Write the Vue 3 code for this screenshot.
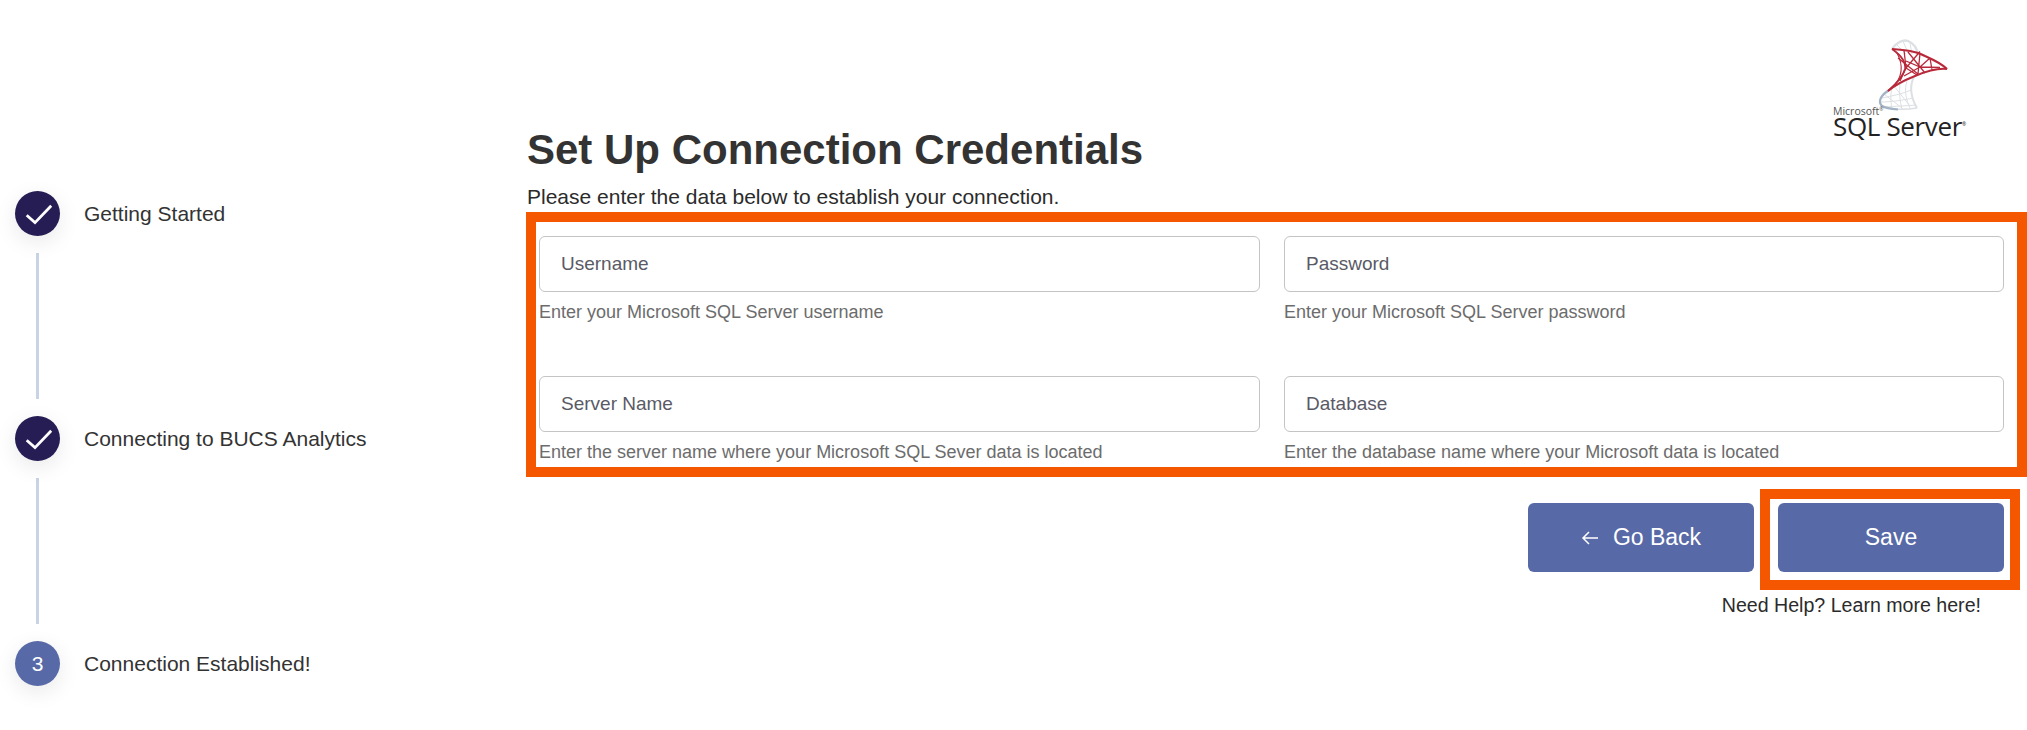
<script setup>
const steps = [
  { label: 'Getting Started', done: true },
  { label: 'Connecting to BUCS Analytics', done: true },
  { label: 'Connection Established!', done: false, n: 3 }
]
const fields = [
  { ph: 'Username', help: 'Enter your Microsoft SQL Server username' },
  { ph: 'Password', help: 'Enter your Microsoft SQL Server password' },
  { ph: 'Server Name', help: 'Enter the server name where your Microsoft SQL Sever data is located' },
  { ph: 'Database', help: 'Enter the database name where your Microsoft data is located' }
]
</script>

<template>
  <div class="page">
    <aside class="steps">
      <template v-for="(s, i) in steps" :key="s.label">
        <div class="step">
          <div class="dot" :class="{ done: s.done }">
            <svg v-if="s.done" width="30" height="24" viewBox="0 0 30 24">
              <path d="M3.7 13.2 L12 20.6 L28.2 3.8" fill="none" stroke="#fff" stroke-width="2.8" />
            </svg>
            <span v-else>{{ s.n }}</span>
          </div>
          <span class="step-label">{{ s.label }}</span>
        </div>
        <div v-if="i < 2" class="line"></div>
      </template>
    </aside>
    <main class="main">
      <div class="logo">
        <svg class="ribbon" width="90" height="75" viewBox="0 0 90 75">
          <g fill="none" stroke="#dcdfe3" stroke-width="1">
            <path d="M22 13 C26 7 33 3 38 5 C43 7 47 12 48 19" stroke-width="2.4"/>
            <path d="M27 9 L36 18 M33 5 L38 17 M40 7 L42 18"/>
            <path d="M18 54 C10 60 8 66 12 70 C20 74 36 74 47 72" stroke-width="1.6"/>
            <path d="M44 41 C39 50 41 62 47 72" stroke-width="2"/>
            <path d="M30 48 C29 56 30 66 32 73 M37 45 C34 54 36 64 40 72 M22 52 C20 60 21 68 22 73"/>
            <path d="M12 62 C22 60 32 58 41 54 M10 66 C22 66 34 64 43 62 M14 71 C26 70 36 70 46 69 M14 58 L32 72 M24 50 L40 70"/>
          </g>
          <path d="M18 55 C10 60 8 66 12 70 C16 72.5 22 73 28 73.5" fill="none" stroke="#a3b3c6" stroke-width="2.2"/>
          <g fill="none" stroke="#b8293a">
            <path d="M22 13 C35 14 46 15 55 20 C64 24 72 28 77 33" stroke-width="2.2"/>
            <path d="M77 33 C68 32 57 35 45 40 C35 44 26 48 18 55" stroke-width="2"/>
            <path d="M22 13 C32 20 36 27 35 33 C33 41 26 48 18 55" stroke-width="1.8"/>
            <path d="M27 17 C34 30 32 42 22 52" stroke-width="1.1"/>
            <path d="M34 14 L36 32 M36 32 L50 15.5 M38 16 L55 37 M50 17 L48 38 M60 22 L50 31 L36 25 M60 22 L62 34 M50 31 L70 31.5 M36 32 L47 39 M34 40 L50 31 M30 45 L36 32 M28 22 L48 38" stroke-width="1.3"/>
          </g>
        </svg>
        <div class="ms">Microsoft<sup>®</sup></div>
        <div class="sql">SQL Server<sup>®</sup></div>
      </div>
      <h1>Set Up Connection Credentials</h1>
      <p class="sub">Please enter the data below to establish your connection.</p>
      <section class="form-box">
        <div v-for="f in fields" :key="f.ph" class="field">
          <input class="input" :placeholder="f.ph" />
          <small>{{ f.help }}</small>
        </div>
      </section>
      <div class="actions">
        <button class="btn back"><span class="arrow">
          <svg width="18" height="16" viewBox="0 0 18 16"><path d="M8 2 L2 8 L8 14 M2 8 H17" fill="none" stroke="#fff" stroke-width="1.5"/></svg>
        </span>Go Back</button>
        <div class="save-box"><button class="btn">Save</button></div>
      </div>
      <p class="help">Need Help? Learn more here!</p>
    </main>
  </div>
</template>

<style>
body { background: #fff; }
</style>

<style scoped>
.page {
  display: flex;
  width: 2027px;
  height: 730px;
  overflow: hidden;
  background: #fff;
  font-family: "Liberation Sans", Arial, sans-serif;
  color: #333;
}
.steps {
  width: 526px;
  flex: none;
  padding: 191px 0 0 15px;
  box-sizing: border-box;
}
.step {
  display: flex;
  align-items: center;
  height: 45px;
  gap: 24px;
}
.dot {
  width: 45px;
  height: 45px;
  border-radius: 50%;
  background: #5869a7;
  color: #fff;
  display: flex;
  align-items: center;
  justify-content: center;
  font-size: 21px;
  box-shadow: 0 6px 22px rgba(0, 0, 0, 0.09);
}
.dot.done { background: #261d54; }
.step-label { font-size: 21px; color: #333; }
.line {
  width: 3px;
  height: 146px;
  margin: 17px 0 17px 21px;
  background: #c8d3e3;
}
.main {
  flex: 1;
  min-width: 0;
  position: relative;
  padding-top: 126px;
}
.logo {
  position: absolute;
  left: 1307px;
  top: 40px;
  width: 140px;
  height: 100px;
}
.ribbon {
  position: absolute;
  left: 37px;
  top: -4px;
  filter: blur(0.35px);
}
.ms {
  margin-top: 66px;
  font-family: "Open Sans", sans-serif;
  font-size: 10.5px;
  line-height: 11px;
  height: 11px;
  color: #555;
  position: relative;
}
.ms sup, .sql sup { font-size: 5px; line-height: 0; }
.sql {
  font-family: "Open Sans", sans-serif;
  font-size: 26px;
  line-height: 18px;
  height: 18px;
  color: #222;
  white-space: nowrap;
  letter-spacing: -0.35px;
  position: relative;
}
h1 {
  margin: 0;
  padding-left: 1px;
  font-size: 42px;
  line-height: 48px;
  font-weight: 700;
  color: #333;
}
.sub {
  margin: 10px 0 0;
  padding-left: 1px;
  font-size: 21px;
  line-height: 25px;
  color: #2b2b2b;
}
.form-box {
  box-sizing: border-box;
  width: 1501px;
  height: 265px;
  margin-top: 3px;
  border: 10px solid #f55600;
  padding: 14px 13px 0 3px;
  display: grid;
  grid-template-columns: 721px 720px;
  column-gap: 24px;
  grid-template-rows: 140px 1fr;
}
.field { display: flex; flex-direction: column; }
.input {
  box-sizing: border-box;
  height: 56px;
  width: 100%;
  padding: 0 21px;
  border: 1px solid #c4c4c4;
  border-radius: 6px;
  font: 19px "Liberation Sans", Arial, sans-serif;
  color: #555;
  outline: none;
  background: #fff;
}
.input::placeholder { color: #5a5a66; opacity: 1; }
small {
  margin-top: 10px;
  font-size: 18px;
  line-height: 21px;
  color: #6c6c6c;
}
.actions {
  display: flex;
  justify-content: flex-end;
  align-items: flex-start;
  width: 1494px;
  margin-top: 12px;
}
.btn {
  box-sizing: border-box;
  width: 226px;
  height: 69px;
  border: none;
  border-radius: 6px;
  background: #5869a7;
  color: #fff;
  font: 23px "Liberation Sans", Arial, sans-serif;
  display: flex;
  align-items: center;
  justify-content: center;
}
.arrow { display: flex; margin-right: 14px; }
.back { margin: 14px 6px 0 0; }
.save-box {
  box-sizing: border-box;
  width: 260px;
  height: 101px;
  border: 10px solid #f55600;
  padding: 4px 6px 5px 8px;
  display: flex;
  align-items: flex-start;
  justify-content: center;
}
.help {
  margin: 3px 0 0;
  width: 1455px;
  text-align: right;
  font-size: 19.6px;
  line-height: 24px;
  color: #2b2b2b;
}
</style>
